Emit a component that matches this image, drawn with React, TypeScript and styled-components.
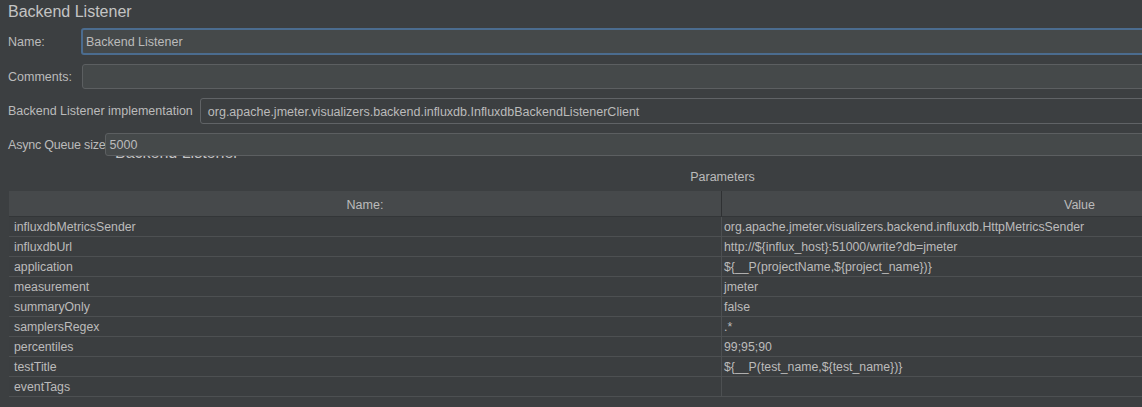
import React from "react";
import styled, { createGlobalStyle } from "styled-components";

const Global = createGlobalStyle`
  html, body { margin: 0; padding: 0; background: #3c3f41; overflow: hidden; }
  body { font-family: "Liberation Sans", Arial, sans-serif; color: #bbbbbb; }
`;

const Page = styled.div`
  width: 1446px;
  height: 407px;
  background: #3c3f41;
  padding-left: 8px;
  box-sizing: border-box;
  display: flex;
  flex-direction: column;
`;

const Title = styled.div`
  font-size: 16px;
  line-height: 24px;
  height: 24px;
  color: #c4c4c4;
`;

const Grid = styled.div`
  display: grid;
  grid-template-columns: 73px 1fr;
  row-gap: 9px;
  align-items: center;
  margin-top: 4px;
`;

const Label = styled.span<{ $tight?: boolean }>`
  font-size: 12.5px;
  color: #bbbbbb;
  white-space: nowrap;
  letter-spacing: ${(p) => (p.$tight ? "-0.2px" : "0")};
`;

const Field = styled.div<{ $variant?: "focus" | "plain" | "flat"; $h: number; $offset?: number; $pad?: number }>`
  height: ${(p) => p.$h}px;
  box-sizing: border-box;
  margin-left: ${(p) => p.$offset ?? 0}px;
  margin-right: 10px;
  border-radius: 3px;
  background: ${(p) => (p.$variant === "flat" ? "#3c3f41" : "#45494a")};
  border: ${(p) =>
    p.$variant === "focus" ? "2px solid #4b6c8f" : p.$variant === "flat" ? "1px solid #606366" : "1px solid #5c5f61"};
  display: flex;
  align-items: center;
  padding-left: ${(p) => p.$pad ?? (p.$variant === "focus" ? 3 : 5)}px;
  padding-top: 1px;
  font-size: 12.5px;
  color: #bbbbbb;
  white-space: nowrap;
  position: relative;
  z-index: 1;
  flex: 1;
`;

const Row = styled.div<{ $mt: number; $gap: number }>`
  display: flex;
  align-items: center;
  gap: ${(p) => p.$gap}px;
  margin-top: ${(p) => p.$mt}px;
  position: relative;
  z-index: 1;
`;

const Legend = styled.div`
  font-size: 16px;
  line-height: 18px;
  margin-top: -12px;
  margin-left: 107px;
  color: #c4c4c4;
  position: relative;
  z-index: 0;
`;

const Caption = styled.div`
  font-size: 12.5px;
  line-height: 14px;
  margin-top: 8px;
  width: 1429px;
  text-align: center;
`;

const Table = styled.div`
  margin-top: 7px;
  margin-left: 1px;
  width: 1428px;
  display: grid;
  grid-template-columns: 713px 1fr;
  background: #3b3e40;
`;

const HeadCell = styled.div<{ $last?: boolean }>`
  height: 26px;
  box-sizing: border-box;
  background: #46494b;
  border-bottom: 1px solid #333638;
  border-right: ${(p) => (p.$last ? "none" : "1px solid #2f3133")};
  display: flex;
  align-items: center;
  justify-content: center;
  padding-top: 2px;
  font-size: 12.5px;
  color: #bbbbbb;
`;

const Cell = styled.div<{ $first?: boolean }>`
  height: 20px;
  box-sizing: border-box;
  border-bottom: 1px solid #4d5052;
  border-right: ${(p) => (p.$first ? "1px solid #4d5052" : "none")};
  display: flex;
  align-items: center;
  padding-left: ${(p) => (p.$first ? 5 : 2)}px;
  font-size: 12.3px;
  color: #bbbbbb;
  white-space: nowrap;
`;

const params: [string, string][] = [
  ["influxdbMetricsSender", "org.apache.jmeter.visualizers.backend.influxdb.HttpMetricsSender"],
  ["influxdbUrl", "http://${influx_host}:51000/write?db=jmeter"],
  ["application", "${__P(projectName,${project_name})}"],
  ["measurement", "jmeter"],
  ["summaryOnly", "false"],
  ["samplersRegex", ".*"],
  ["percentiles", "99;95;90"],
  ["testTitle", "${__P(test_name,${test_name})}"],
  ["eventTags", ""],
];

export default function App() {
  return (
    <>
      <Global />
      <Page>
        <Title>Backend Listener</Title>
        <Grid>
          <Label>Name:</Label>
          <Field $variant="focus" $h={27}>Backend Listener</Field>
          <Label>Comments:</Label>
          <Field $variant="plain" $h={25} $offset={1} />
        </Grid>
        <Row $mt={9} $gap={7}>
          <Label>Backend Listener implementation</Label>
          <Field $variant="flat" $h={26} $pad={7}>
            org.apache.jmeter.visualizers.backend.influxdb.InfluxdbBackendListenerClient
          </Field>
        </Row>
        <Row $mt={9} $gap={0}>
          <Label $tight>Async Queue size</Label>
          <Field $variant="plain" $h={23} $pad={4} $offset={-1}>5000</Field>
        </Row>
        <Legend>Backend Listener</Legend>
        <Caption>Parameters</Caption>
        <Table>
          <HeadCell>Name:</HeadCell>
          <HeadCell $last>Value</HeadCell>
          {params.map(([k, v]) => (
            <React.Fragment key={k}>
              <Cell $first>{k}</Cell>
              <Cell>{v}</Cell>
            </React.Fragment>
          ))}
        </Table>
      </Page>
    </>
  );
}
